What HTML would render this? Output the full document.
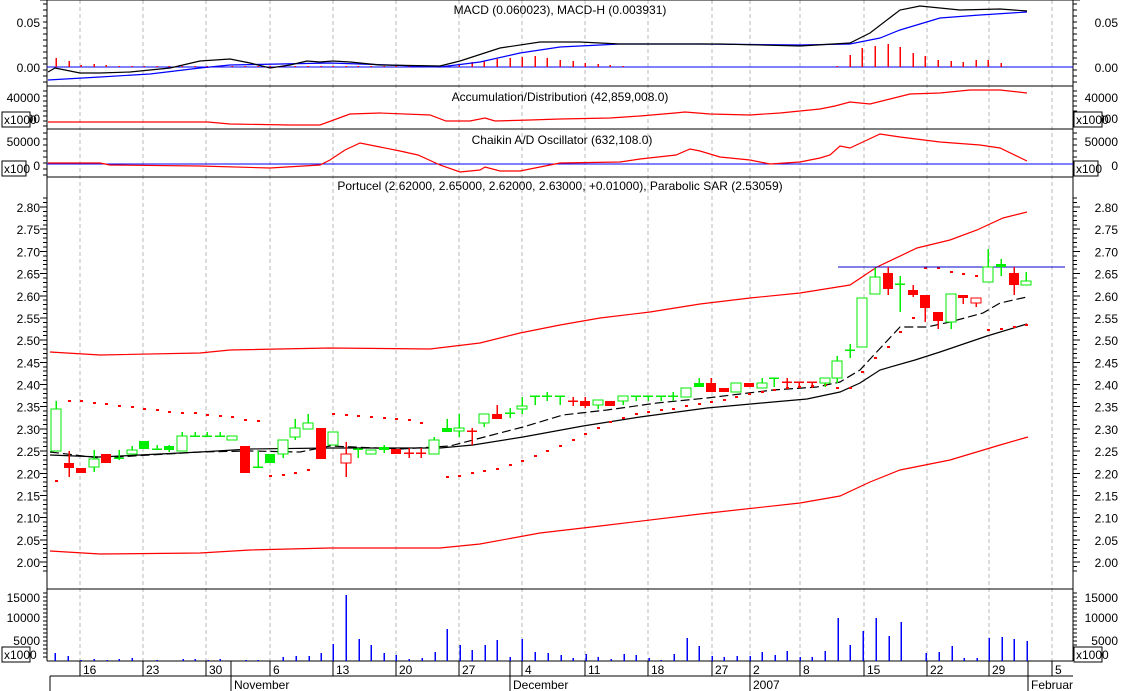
<!DOCTYPE html>
<html><head><meta charset="utf-8"><style>
html,body{margin:0;padding:0;background:#fff;width:1122px;height:691px;overflow:hidden}
svg text{font-family:"Liberation Sans",Arial,sans-serif;font-size:12px;fill:#000}
</style></head><body>
<svg id="s" width="1122" height="691" xmlns="http://www.w3.org/2000/svg" shape-rendering="crispEdges"></svg>
<script>
var s=document.getElementById('s'),h='';
function L(x1,y1,x2,y2,c,w,extra){h+='<line x1="'+x1+'" y1="'+y1+'" x2="'+x2+'" y2="'+y2+'" stroke="'+c+'" stroke-width="'+(w||1)+'" '+(extra||'')+'/>';}
function R(x,y,w,hh,f,st){h+='<rect x="'+x+'" y="'+y+'" width="'+w+'" height="'+hh+'" fill="'+f+'" '+(st?'stroke="'+st+'" stroke-width="1.3"':'')+'/>';}
function T(x,y,t,a){h+='<text x="'+x+'" y="'+y+'" text-anchor="'+(a||'start')+'">'+t+'</text>';}
function P(pts,c,dash){h+='<polyline fill="none" stroke="'+c+'" stroke-width="1.2" shape-rendering="auto" '+(dash?'stroke-dasharray="'+dash+'"':'')+' points="'+pts.map(function(p){return p[0]+','+p[1]}).join(' ')+'"/>';}
var XL=47,XR=1073;
// grid
[80,143,206,270,333,396,459,522,585,648,712,750,800,864,927,989,1052].forEach(function(x){L(x,0,x,661,'#b8b8b8',1,'stroke-dasharray="4,3"');});
// panel separators
[0,86,129,177,589,661].forEach(function(y){L(XL,y,XR,y,'#000',1.3);});
L(XL,0,XL,661,'#000',1.3);L(XR,0,XR,661,'#000',1.3);
L(50,676,XR,676,'#000',1.3);
// day ticks
[[80,'16'],[143,'23'],[206,'30'],[270,'6'],[333,'13'],[396,'20'],[459,'27'],[522,'4'],[585,'11'],[648,'18'],[712,'27'],[750,'2'],[800,'8'],[864,'15'],[927,'22'],[989,'29'],[1052,'5']].forEach(function(d){L(d[0],661,d[0],676,'#000',1);T(d[0]+3,674,d[1]);});
[[231,'November'],[510,'December'],[750,'2007'],[1028,'Februar']].forEach(function(d){L(d[0],661,d[0],691,'#000',1);T(d[0]+3,689,d[1]);});
L(50,676,50,691,'#000',1);
// axis labels & ticks
function axis(y0,y1,step,major){for(var y=y0;y<=y1;y+=step){var m=false;L(XL-4,y,XL,y,'#000');L(XR,y,XR+4,y,'#000');}}
// MACD
axis(4,84,6);
[[22,'0.05'],[67,'0.00']].forEach(function(a){L(XL-7,a[1],XL,a[1],'#000');L(XR,a[1],XR+7,a[1],'#000');T(40,a[1]+5,a[0].replace?a[0]:a[0],'end');});
T(40,27,'0.05','end');T(40,72,'0.00','end');T(1118,27,'0.05','end');T(1118,72,'0.00','end');
// AD
axis(91,127,5);
T(40,102,'40000','end');T(1118,102,'40000','end');T(40,123,'30000','end');T(1118,123,'30000','end');
// Chaikin
axis(133,176,6);
T(40,146,'50000','end');T(1118,146,'50000','end');T(40,170,'0','end');T(1118,170,'0','end');
// Price
for(var p=0;p<=84;p++){var y=207+(p-2)*4.4375;if(y<180||y>587)continue;var big=(p%5==2);L(XL-(big?7:4),y,XL,y,'#000');L(XR,y,XR+(big?7:4),y,'#000');}
for(var i=0;i<=16;i++){var v=(2.80-i*0.05).toFixed(2),y=207+i*22.19;T(40,y+5,v,'end');T(1118,y+5,v,'end');}
// volume
axis(593,660,4);
T(40,602,'15000','end');T(1118,602,'15000','end');T(40,622,'10000','end');T(1118,622,'10000','end');T(40,645,'5000','end');T(1118,645,'5000','end');
// boxes
function box(x,y,w,t){R(x,y,w,15,'#fff','#000');T(x+2,y+12,t);}
// titles
T(560,14,'MACD (0.060023), MACD-H (0.003931)','middle');
T(560,101,'Accumulation/Distribution (42,859,008.0)','middle');
T(562,144,'Chaikin A/D Oscillator (632,108.0)','middle');
T(560,190,'Portucel (2.62000, 2.65000, 2.62000, 2.63000, +0.01000), Parabolic SAR (2.53059)','middle');
// MACD lines
L(XL,67,XR,67,'#0000ff',1.3);
var X=function(k){return Math.round(56+12.6*k);};
var hist=[58,61,65,64,65,66,66,66,66,66,66,66,66,66,66,66,66,66,66,66,66,66,66,66,66,66,66,66,66,66,66,66,64,62,61,59,58,57,56,58,60,61,63,64,65,66,67,67,67,67,67,67,67,67,67,67,67,67,67,67,67,67,66,55,48,46,44,47,53,56,60,61,62,60,60,63,67,67];
for(var k=0;k<78;k++){if(hist[k]<67)L(X(k),hist[k],X(k),67,'#ff0000',1.5);}
P([[48,80],[100,77],[150,74],[200,68],[230,65],[280,64],[330,63],[390,65],[440,67],[480,62],[520,53],[560,47],[620,44],[700,44],[800,45],[850,44],[880,38],[900,30],[940,18],[980,15],[1027,12]],'#0000ff');
P([[48,72],[55,68],[60,69],[80,73],[100,73],[130,72],[150,70],[170,68],[200,61],[230,59],[250,63],[270,68],[290,65],[307,61],[320,62],[333,61],[350,62],[380,65],[440,66],[460,61],[500,48],[540,42],[580,42],[620,44],[720,44],[800,46],[850,43],[870,33],[900,10],[920,6],[960,10],[1000,9],[1027,11]],'#000');
// AD
P([[48,122],[208,122],[230,124],[290,125],[320,125],[350,114],[380,113],[430,115],[446,121],[470,121],[485,118],[495,121],[530,120],[560,119],[610,118],[640,116],[675,113],[685,112],[710,114],[750,115],[780,113],[820,109],[835,106],[850,102],[870,104],[890,99],[910,94],[940,93],[970,90],[1000,90],[1027,93]],'#ff0000');
// Chaikin
L(XL,164,XR,164,'#0000ff',1.3);
P([[48,163],[100,163],[110,165],[200,166],[270,168],[320,165],[330,160],[345,150],[360,143],[380,147],[400,151],[418,155],[440,165],[460,172],[480,170],[485,167],[500,171],[520,171],[540,167],[560,163],[620,162],[640,159],[676,155],[690,149],[700,151],[720,157],[750,160],[770,164],[800,162],[820,158],[830,155],[840,146],[850,148],[865,141],[880,134],[900,137],[940,142],[980,145],[1000,148],[1027,161]],'#ff0000');
// Bollinger
P([[50,352],[100,355],[200,353],[230,350],[330,348],[430,349],[480,343],[520,333],[560,325],[600,318],[650,312],[700,304],[750,298],[800,293],[850,285],[877,267],[917,248],[950,240],[977,230],[1003,218],[1027,212]],'#ff0000');
P([[50,551],[100,554],[200,553],[250,550],[330,548],[440,548],[480,544],[540,533],[600,526],[700,514],[800,503],[840,496],[870,482],[900,470],[950,460],[1000,445],[1028,437]],'#ff0000');
P([[50,455],[100,457],[200,452],[250,449],[330,448],[440,448],[473,445],[523,437],[583,426],[640,417],[707,408],[773,402],[807,399],[840,392],[860,383],[880,370],[915,360],[940,352],[987,336],[1027,324]],'#000');
P([[50,452],[100,458],[200,452],[250,451],[300,452],[330,446],[400,449],[450,446],[473,440],[523,427],[563,415],[607,410],[657,403],[707,398],[773,390],[817,387],[840,382],[860,370],[872,357],[900,327],[927,327],[950,322],[983,313],[1000,303],[1027,297]],'#000','9,4');
// SAR
var sar=[481,401,401,403,404,406,407,409,410,412,413,413,415,416,417,420,421,476,475,473,470,null,414,415,416,417,418,419,420,423,null,477,476,473,471,469,465,461,456,451,446,440,434,428,422,418,414,412,410,409,406,404,402,400,397,394,392,390,388,387,386,385,388,388,372,358,347,332,318,268,268,272,274,276,330,329,327,325];
// fix indexes: sar had 78 entries approx
for(var k=0;k<sar.length&&k<78;k++){if(sar[k])R(X(k)-1,sar[k]-1,3,2,'#ff0000');}
// horizontal line
L(838,267,1065,267,'#0000cc',1.3);
// candles
var G='#00ee00',Rd='#ff0000';
var C=[['gh',409,451,401,451],['rf',463,468,451,477],['rf',468,473,468,473],['gh',459,467,450,472],['rf',454,463,454,463],['gx',458,458,450,460],['gh',450,454,446,454],['gf',441,449,441,449],['gx',449,449,445,449],['gf',446,450,445,452],['gh',436,451,432,451],['gx',436,436,432,436],['gx',436,436,432,436],['gx',436,436,432,436],['gh',436,440,436,440],['rf',446,473,446,473],['gx',467,467,451,467],['gf',454,463,454,463],['gh',440,454,440,458],['gh',428,437,419,440],['gh',423,429,414,429],['rf',428,459,428,459],['gh',432,445,432,445],['rh',454,463,442,477],['gx',449,449,448,458],['gh',450,454,450,454],['gf',447,450,445,453],['rf',449,454,449,454],['rx',453,453,448,458],['rx',453,453,448,458],['gh',440,454,437,454],['gf',428,432,419,432],['gh',428,431,414,437],['rx',431,431,428,445],['gh',414,423,414,427],['rf',414,419,405,419],['gx',413,413,408,418],['gh',406,409,397,414],['gx',396,396,396,405],['gx',396,396,392,401],['gx',396,396,396,405],['rx',401,401,397,406],['rf',401,406,397,408],['gh',400,405,400,409],['rf',401,406,401,406],['gh',396,401,396,405],['gx',396,396,396,401],['gx',396,396,396,401],['gx',396,396,396,401],['gx',396,396,392,401],['gh',388,397,388,397],['gf',383,387,378,387],['rf',383,392,378,392],['rf',388,392,388,392],['gh',383,392,383,392],['rf',383,387,383,387],['gh',383,388,378,388],['gx',378,378,378,387],['rx',382,382,378,388],['rx',382,382,382,388],['rx',382,382,382,388],['gh',378,383,378,387],['gh',361,378,356,383],['gx',350,350,344,358],['gh',298,347,298,347],['gh',277,294,268,294],['rf',273,289,267,295],['gx',284,284,276,312],['rf',290,295,285,297],['rf',295,308,295,322],['rf',312,321,312,329],['gh',294,322,294,329],['rf',295,298,295,304],['rh',298,303,298,307],['gh',267,282,249,282],['gf',264,267,259,276],['rf',273,285,267,295],['gh',281,285,272,285]];
C.forEach(function(c,k){var x=X(k),col=c[0][0]=='g'?G:Rd;
 L(x,c[3],x,c[4],col,1.5);
 if(c[0][1]=='x'){L(x-5,c[1],x+5,c[1],col,1.5);}
 else if(c[0][1]=='f'){R(x-5,c[1],10,Math.max(c[2]-c[1],2),col);}
 else{R(x-5,c[1],10,Math.max(c[2]-c[1],2),'#fff',col);}
});
// volume
var vol={55:653,68:656,81:660,94:659,107:660,119:659,132:658,157:660,183:659,195:659,208:660,220:659,246:660,258:660,283:657,296:656,309:656,321:653,333:644,346:595,359:639,371:645,384:653,396:655,409:659,422:658,435:652,447:629,460:645,472:650,485:645,497:640,510:657,522:639,535:652,548:653,561:655,573:658,586:654,598:657,611:659,624:654,636:655,649:658,661:660,674:654,687:638,699:646,712:656,724:657,737:656,750:656,762:652,775:655,787:651,800:657,812:657,825:651,838:618,850:645,863:631,876:618,889:636,901:622,926:653,939:652,952:646,964:658,977:658,989:638,1002:637,1014:639,1027:641};
for(var x in vol)L(+x,vol[x],+x,661,'#0000ff',1.5);
box(2,112,28,'x1000');box(1074,112,28,'x1000');
box(2,161,24,'x100');box(1074,161,24,'x100');
box(2,647,28,'x1000');box(1074,647,28,'x1000');
s.innerHTML=h;
</script>
</body></html>
